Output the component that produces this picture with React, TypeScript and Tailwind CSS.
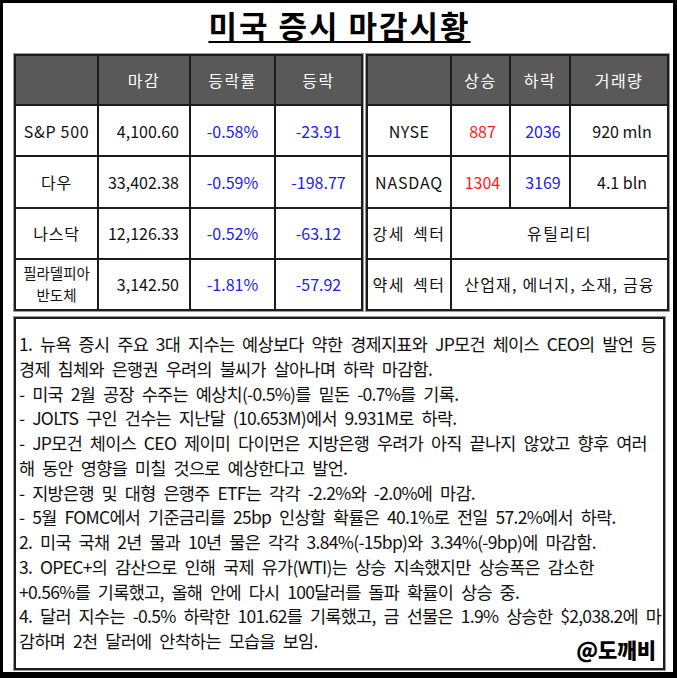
import React from "react";

type IndexRow = { name: string; close: string; rate: string; diff: string; small?: boolean };

const indexRows: IndexRow[] = [
  { name: "S&P 500", close: "4,100.60", rate: "-0.58%", diff: "-23.91" },
  { name: "다우", close: "33,402.38", rate: "-0.59%", diff: "-198.77" },
  { name: "나스닥", close: "12,126.33", rate: "-0.52%", diff: "-63.12" },
  { name: "필라델피아\n반도체", close: "3,142.50", rate: "-1.81%", diff: "-57.92", small: true },
];

const notes = [
  "1. 뉴욕 증시 주요 3대 지수는 예상보다 약한 경제지표와 JP모건 체이스 CEO의 발언 등",
  "경제 침체와 은행권 우려의 불씨가 살아나며 하락 마감함.",
  "- 미국 2월 공장 수주는 예상치(-0.5%)를 밑돈 -0.7%를 기록.",
  "- JOLTS 구인 건수는 지난달 (10.653M)에서 9.931M로 하락.",
  "- JP모건 체이스 CEO 제이미 다이먼은 지방은행 우려가 아직 끝나지 않았고 향후 여러",
  "해 동안 영향을 미칠 것으로 예상한다고 발언.",
  "- 지방은행 및 대형 은행주 ETF는 각각 -2.2%와 -2.0%에 마감.",
  "- 5월 FOMC에서 기준금리를 25bp 인상할 확률은 40.1%로 전일 57.2%에서 하락.",
  "2. 미국 국채 2년 물과 10년 물은 각각 3.84%(-15bp)와 3.34%(-9bp)에 마감함.",
  "3. OPEC+의 감산으로 인해 국제 유가(WTI)는 상승 지속했지만 상승폭은 감소한",
  "+0.56%를 기록했고, 올해 안에 다시 100달러를 돌파 확률이 상승 중.",
  "4. 달러 지수는 -0.5% 하락한 101.62를 기록했고, 금 선물은 1.9% 상승한 $2,038.2에 마",
  "감하며 2천 달러에 안착하는 모습을 보임.",
];

const cell = "border-2 border-[#1c1c1c] text-center align-middle";
const head = "border-2 border-[#1c1c1c] bg-[#595959] text-center align-middle font-normal text-white tracking-[1.5px]";
const label = "tracking-[1.5px] [word-spacing:3px]";

export default function App() {
  return (
    <div
      className="box-border flex h-[678px] w-[677px] flex-col border-t-[3px] border-r-[4px] border-b-[6px] border-l-[3px] border-black bg-white pr-[8px] pl-[11px] text-[#111]"
      style={{ fontFamily: '"Noto Sans CJK KR", "Noto Sans", sans-serif' }}
    >
      <div className="flex h-[51px] shrink-0 items-start justify-center pt-[3px]">
        <h1 className="text-[31px] leading-[38px] font-bold tracking-[2px] text-black underline decoration-[2px] underline-offset-[3px]">
          미국 증시 마감시황
        </h1>
      </div>

      <div className="flex h-[257px] shrink-0 gap-[3px] text-[16px]">
        <table className="h-full w-[347px] table-fixed border-collapse shadow-[0_0_0_1px_#9a9a9a]">
          <colgroup>
            <col className="w-[83px]" />
            <col className="w-[92px]" />
            <col className="w-[85px]" />
            <col className="w-[87px]" />
          </colgroup>
          <thead>
            <tr className="h-[50px]">
              <th className={head}></th>
              <th className={head}>마감</th>
              <th className={head}>등락률</th>
              <th className={head}>등락</th>
            </tr>
          </thead>
          <tbody>
            {indexRows.map((r) => (
              <tr key={r.name} className="h-[51px]">
                <td className={`${cell} ${r.small ? "text-[14.5px] leading-[22px] whitespace-pre-line" : "tracking-[0.7px]"}`}>{r.name}</td>
                <td className={`${cell} !text-right pr-[10px]`}>{r.close}</td>
                <td className={`${cell} text-[#2020f0]`}>{r.rate}</td>
                <td className={`${cell} text-[#2020f0]`}>{r.diff}</td>
              </tr>
            ))}
          </tbody>
        </table>

        <table className="h-full w-[301px] table-fixed border-collapse shadow-[0_0_0_1px_#9a9a9a]">
          <colgroup>
            <col className="w-[84px]" />
            <col className="w-[59px]" />
            <col className="w-[60px]" />
            <col className="w-[98px]" />
          </colgroup>
          <thead>
            <tr className="h-[50px]">
              <th className={head}></th>
              <th className={head}>상승</th>
              <th className={head}>하락</th>
              <th className={head}>거래량</th>
            </tr>
          </thead>
          <tbody>
            <tr className="h-[51px]">
              <td className={`${cell} tracking-[0.5px]`}>NYSE</td>
              <td className={`${cell} pl-[4px] text-[#ff1a1a]`}>887</td>
              <td className={`${cell} pl-[6px] text-[#2020f0]`}>2036</td>
              <td className={`${cell} pl-[6px]`}>920 mln</td>
            </tr>
            <tr className="h-[51px]">
              <td className={`${cell} tracking-[0.8px]`}>NASDAQ</td>
              <td className={`${cell} pl-[4px] text-[#ff1a1a]`}>1304</td>
              <td className={`${cell} pl-[6px] text-[#2020f0]`}>3169</td>
              <td className={`${cell} pl-[6px]`}>4.1 bln</td>
            </tr>
            <tr className="h-[51px]">
              <td className={`${cell} ${label}`}>강세 섹터</td>
              <td className={`${cell} tracking-[1.5px]`} colSpan={3}>유틸리티</td>
            </tr>
            <tr className="h-[51px]">
              <td className={`${cell} ${label}`}>약세 섹터</td>
              <td className={`${cell} tracking-[1.2px]`} colSpan={3}>산업재, 에너지, 소재, 금융</td>
            </tr>
          </tbody>
        </table>
      </div>

      <div className="relative mt-[6px] h-[353px] shrink-0 border-2 border-[#1c1c1c] pt-[13px] pl-[3px] text-[17.5px] leading-[24.75px] tracking-[-0.7px] [word-spacing:4.6px] shadow-[0_0_0_1px_#9a9a9a]">
        {notes.map((line) => (
          <p key={line} className="whitespace-nowrap">
            {line}
          </p>
        ))}
        <span className="absolute right-[7px] bottom-[8px] text-[21px] leading-none font-black tracking-normal text-black [word-spacing:0]">@도깨비</span>
      </div>
    </div>
  );
}
